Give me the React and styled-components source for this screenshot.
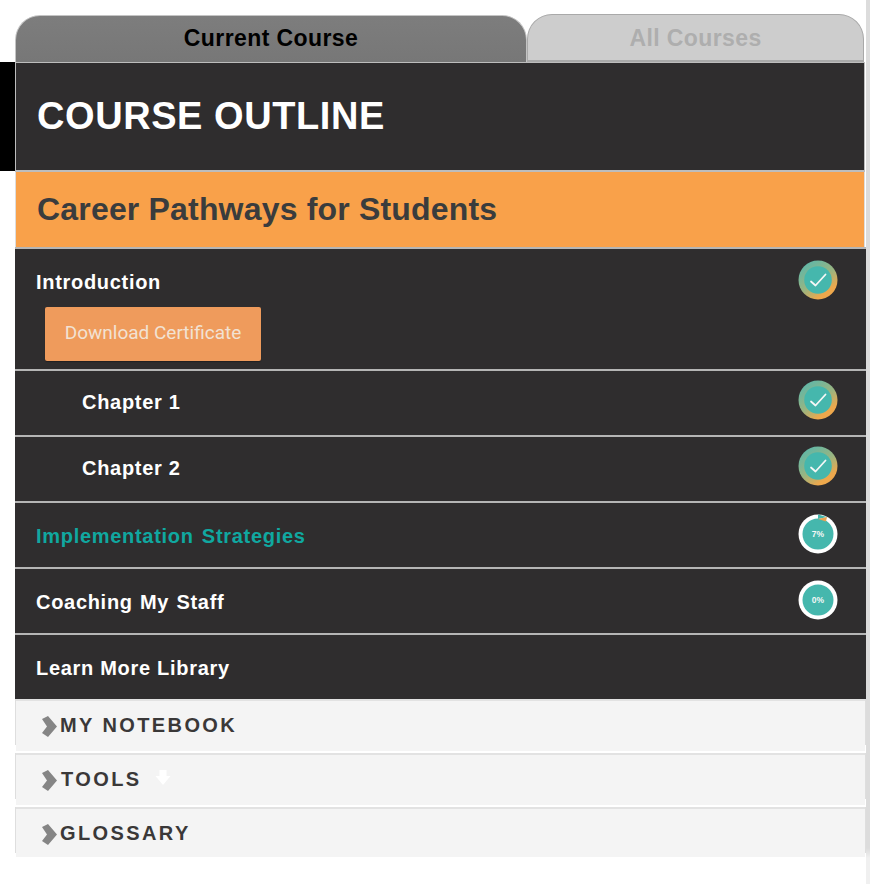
import React from "react";
import styled, { createGlobalStyle } from "styled-components";

const Global = createGlobalStyle`
  html, body { margin: 0; padding: 0; background: #fff; }
  body { font-family: "Liberation Sans", Arial, sans-serif; width: 870px; height: 884px; overflow: hidden; }
`;

const Page = styled.div`
  position: relative;
  width: 870px;
  height: 884px;
  padding: 14px 4px 0 15px;
  box-sizing: border-box;
`;
const BlackTab = styled.div`
  position: absolute;
  left: 0;
  top: 62px;
  width: 15px;
  height: 109px;
  background: #000;
`;
const ScrollEdge = styled.div`
  position: absolute;
  right: 0;
  top: 0;
  width: 4px;
  height: 884px;
  background: linear-gradient(#dcdcdc 0, #dcdcdc 848px, #f0f0f0 858px);
`;
const Tabs = styled.div`
  display: flex;
  height: 48px;
  width: 849px;
`;
const Tab = styled.div`
  box-sizing: border-box;
  display: flex;
  justify-content: center;
  align-items: flex-start;
  font-size: 23px;
  font-weight: 700;
  line-height: 26px;
  padding-top: 10px;
  border-radius: 25px 25px 0 0;
  letter-spacing: 0.4px;
  ${(p) =>
    p.$active
      ? `width: 512px; margin-top: 1px; height: 47px; color: #000; background: linear-gradient(#7d7d7d, #777); border: 1px solid #c4c4c4; border-bottom: none; padding-top: 9px;`
      : `width: 337px; color: #aeaeae; background: #cdcdcd; border: 1px solid #a9a9a9; border-bottom: 2px solid #a9a9a9;`}
`;
const Panel = styled.div`
  width: 851px;
  display: flex;
  flex-direction: column;
`;
const Header = styled.div`
  box-sizing: border-box;
  height: 110px;
  width: 850px;
  background: #2f2d2e;
  border: 1px solid #bdbdbd;
  border-width: 1px 1px 2px 1px;
  display: flex;
  align-items: center;
  padding: 0 0 0 21px;
  color: #fff;
  font-size: 38px;
  font-weight: 700;
  letter-spacing: 0.57px;
`;
const CourseTitle = styled.div`
  box-sizing: border-box;
  width: 850px;
  height: 75px;
  background: #f9a14a;
  border-left: 1px solid #ddd;
  border-right: 1px solid #ddd;
  display: flex;
  align-items: center;
  padding-left: 21px;
  color: #3a3c3d;
  font-size: 32px;
  font-weight: 700;
  letter-spacing: 0.18px;
`;
const Row = styled.div`
  box-sizing: border-box;
  height: ${(p) => p.$h || 66}px;
  background: #2f2d2e;
  border-top: 2px solid #b5b5b5;
  position: relative;
  display: flex;
  justify-content: space-between;
  align-items: flex-start;
  padding: ${(p) => p.$top ?? 21}px 28px 0 ${(p) => (p.$indent ? 67 : 21)}px;
`;
const RowLabel = styled.span`
  color: ${(p) => p.$color || "#fff"};
  font-size: 20px;
  line-height: 24px;
  font-weight: 700;
  letter-spacing: 0.7px;
  word-spacing: ${(p) => p.$ws || 0}px;
`;
const RingSlot = styled.div`
  width: 40px;
  height: 40px;
  margin-top: -10px;
  flex: none;
`;
const CertButton = styled.div`
  position: absolute;
  left: 30px;
  top: 58px;
  width: 216px;
  height: 54px;
  box-sizing: border-box;
  border-radius: 2px;
  background: #ef9b5c;
  box-shadow: 0 1px 1px rgba(0, 0, 0, 0.3);
  color: #f2e2d3;
  font-family: Roboto, "Liberation Sans", sans-serif;
  font-size: 19px;
  display: flex;
  align-items: center;
  justify-content: center;
  padding-bottom: 3px;
`;
const Accordion = styled.div`
  box-sizing: border-box;
  width: 849px;
  margin-left: 1px;
  height: ${(p) => p.$h || 52}px;
  margin-bottom: ${(p) => p.$mb ?? 2}px;
  background: #f4f4f4;
  border-top: 2px solid #e2e2e2;
  display: flex;
  align-items: flex-start;
  padding: 11px 0 0 24px;
  color: #3a3838;
  font-size: 20px;
  line-height: 26px;
  font-weight: 700;
  letter-spacing: 2.4px;
  position: relative;
  &::before, &::after {
    content: "";
    position: absolute;
    top: -2px;
    width: 1px;
    height: 46px;
    background: #dedede;
  }
  &::before { left: -1px; }
  &::after { right: -1px; }
`;
const ChevronWrap = styled.svg`
  width: 18px;
  height: 22px;
  flex: none;
  margin-top: 4px;
  margin-right: ${(p) => p.$mr ?? 2}px;
`;
const GhostArrow = styled.svg`
  width: 18px;
  height: 18px;
  margin: 3px 0 0 12px;
`;

function Chevron({ mr }) {
  return (
    <ChevronWrap $mr={mr} viewBox="0 0 18 22">
      <path d="M2 3L8 0L17 10.500L8 21L2 17L7 10.500z" fill="#858585" />
    </ChevronWrap>
  );
}

function DoneRing() {
  return (
    <svg width="40" height="40" viewBox="0 0 40 40">
      <defs>
        <linearGradient id="ring" x1="0.2" y1="0.1" x2="0.8" y2="0.95">
          <stop offset="0" stopColor="#63b7a5" />
          <stop offset="0.5" stopColor="#9cb47f" />
          <stop offset="0.85" stopColor="#eea84c" />
        </linearGradient>
      </defs>
      <circle cx="20" cy="20" r="19.5" fill="url(#ring)" />
      <circle cx="20" cy="20" r="13.8" fill="#45b7ad" />
      <path d="M13 21.500l4.500 4 10-11" fill="none" stroke="#f4f7f6" strokeWidth="1.800" strokeLinecap="round" strokeLinejoin="round" />
    </svg>
  );
}

function PercentRing({ value }) {
  return (
    <svg width="40" height="40" viewBox="0 0 40 40">
      <circle cx="20" cy="20" r="19.500" fill="#fff" />
      <circle cx="20" cy="20" r="15.500" fill="#45b7ad" />
      {value > 0 && (
        <>
          <path d="M20 .5L29 3 20 5z" fill="#45b7ad" />
          <path d="M20 5L29 3 28 7.500z" fill="#e9a351" />
        </>
      )}
      <text x="20" y="23" textAnchor="middle" fontFamily="Liberation Sans" fontSize="8.5" fontWeight="700" fill="#f4f7f6">{value}%</text>
    </svg>
  );
}

export default function App() {
  return (
    <Page>
      <Global />
      <BlackTab />
      <ScrollEdge />
      <Tabs>
        <Tab $active>Current Course</Tab>
        <Tab>All Courses</Tab>
      </Tabs>
      <Panel>
        <Header>COURSE OUTLINE</Header>
        <CourseTitle>Career Pathways for Students</CourseTitle>
        <Row $h={122}>
          <RowLabel>Introduction</RowLabel>
          <RingSlot><DoneRing /></RingSlot>
          <CertButton>Download Certificate</CertButton>
        </Row>
        <Row $indent $top={19}>
          <RowLabel>Chapter 1</RowLabel>
          <RingSlot><DoneRing /></RingSlot>
        </Row>
        <Row $indent $top={19}>
          <RowLabel>Chapter 2</RowLabel>
          <RingSlot><DoneRing /></RingSlot>
        </Row>
        <Row>
          <RowLabel $color="#10a8a0" $ws={2}>Implementation Strategies</RowLabel>
          <RingSlot><PercentRing value={7} /></RingSlot>
        </Row>
        <Row>
          <RowLabel $ws={1}>Coaching My Staff</RowLabel>
          <RingSlot><PercentRing value={0} /></RingSlot>
        </Row>
        <Row>
          <RowLabel>Learn More Library</RowLabel>
        </Row>
        <Accordion><Chevron />MY NOTEBOOK</Accordion>
        <Accordion><Chevron mr={3} />TOOLS
          <GhostArrow viewBox="0 0 18 18"><path d="M5.500 1h7v6h4L9 16 1.500 7h4z" fill="#fff" /></GhostArrow>
        </Accordion>
        <Accordion $h={50} $mb={0}><Chevron />GLOSSARY</Accordion>
      </Panel>
    </Page>
  );
}
